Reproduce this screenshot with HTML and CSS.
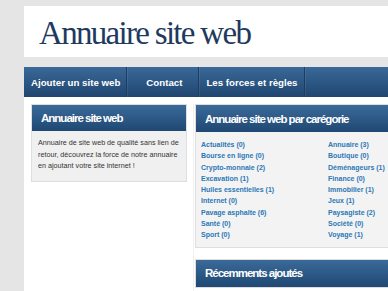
FILE: index.html
```html
<!DOCTYPE html>
<html lang="fr">
<head>
  <meta charset="UTF-8" />
  <title>Annuaire site web</title>
  <link rel="stylesheet" href="styles.css">
</head>
<body>
  <div class="page">
    <div class="header">
      <h1 class="logo">Annuaire site web</h1>
    </div>
    <div class="navbar">
      <a href="#" class="nav-item">Ajouter un site web</a>
      <a href="#" class="nav-item nav-contact">Contact</a>
      <a href="#" class="nav-item nav-rules">Les forces et règles</a>
    </div>
    <div class="content">
      <div class="sidebar">
        <div class="box">
          <div class="box-title">Annuaire site web</div>
          <div class="box-body intro">
            Annuaire de site web de qualité sans lien de retour, découvrez la force de notre annuaire en ajoutant votre site internet !
          </div>
        </div>
      </div>
      <div class="main">
        <div class="box">
          <div class="box-title">Annuaire site web par carégorie</div>
          <div class="box-body cats">
            <a href="#">Actualités (0)</a>
            <a href="#">Annuaire (3)</a>
            <a href="#">Bourse en ligne (0)</a>
            <a href="#">Boutique (0)</a>
            <a href="#">Crypto-monnaie (2)</a>
            <a href="#">Déménageurs (1)</a>
            <a href="#">Excavation (1)</a>
            <a href="#">Finance (0)</a>
            <a href="#">Huiles essentielles (1)</a>
            <a href="#">Immobilier (1)</a>
            <a href="#">Internet (0)</a>
            <a href="#">Jeux (1)</a>
            <a href="#">Pavage asphalte (6)</a>
            <a href="#">Paysagiste (2)</a>
            <a href="#">Santé (0)</a>
            <a href="#">Société (0)</a>
            <a href="#">Sport (0)</a>
            <a href="#">Voyage (1)</a>
          </div>
        </div>
        <div class="box recent">
          <div class="box-title">Récemments ajoutés</div>
        </div>
      </div>
    </div>
  </div>
</body>
</html>
```

FILE: styles.css
```css
html, body {
  margin: 0;
  padding: 0;
  background-color: #e5e5e5;
  font-family: "Liberation Sans", Arial, sans-serif;
  overflow: hidden;
}

.page {
  width: 440px;
  margin-left: 24px;
  padding-top: 6px;
}

.header {
  height: 51px;
  background: #fff;
  margin-bottom: 10px;
}

.logo {
  margin: 0;
  padding: 10px 0 0 15px;
  font-family: "Liberation Serif", "Times New Roman", serif;
  font-weight: normal;
  font-size: 33px;
  line-height: 34px;
  letter-spacing: -1.7px;
  color: #1e3a5e;
}

.navbar {
  display: flex;
  height: 30px;
  background: linear-gradient(#3a6898, #1f4670);
}

.nav-item {
  display: flex;
  align-items: center;
  padding: 0 6px 0 7px;
  color: #fff;
  font-size: 9.7px;
  font-weight: bold;
  text-decoration: none;
  border-right: 1px solid #1b3d61;
  box-shadow: 1px 0 0 rgba(255,255,255,0.08);
}

.nav-contact {
  padding: 0 16px 0 19px;
}

.nav-rules {
  padding: 0 7px 0 7px;
}

.content {
  display: flex;
  background: #fff;
  height: 200px;
  padding-top: 7px;
}

.sidebar {
  width: 156px;
  padding: 0 6px 0 7px;
  border-right: 1px solid #f0f0f0;
}

.main {
  flex: 1;
  padding-left: 1px;
}

.box {
  border: 1px solid #dedede;
  background: #f0f0f0;
}

.box-title {
  height: 26px;
  display: flex;
  align-items: center;
  padding-left: 9px;
  background: linear-gradient(#3b6a99, #1f4873);
  color: #fff;
  font-size: 11.5px;
  font-weight: bold;
  letter-spacing: -1px;
}

.intro {
  padding: 6px 2px 9px 6px;
  font-size: 7.2px;
  line-height: 11.7px;
  color: #333;
}

.main .box-title {
  height: 27px;
}

.cats {
  display: grid;
  grid-template-columns: 127px 1fr;
  padding: 7px 5px 6px 5px;
  background: #f3f3f3;
}

.cats a {
  font-size: 7px;
  line-height: 11.3px;
  font-weight: bold;
  color: #2b78b6;
  text-decoration: none;
}

.recent {
  margin-top: 11px;
}
```
